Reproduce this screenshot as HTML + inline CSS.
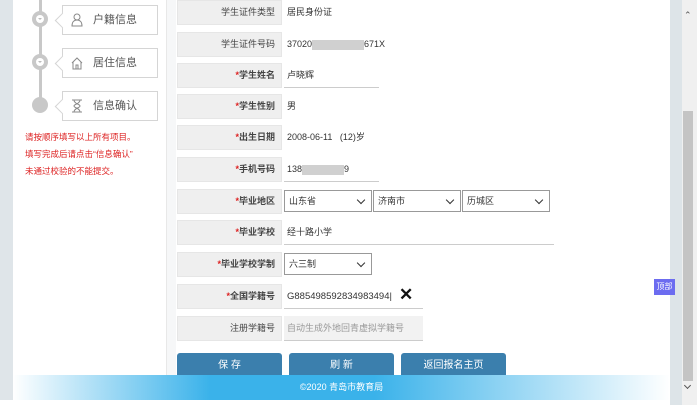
<!DOCTYPE html>
<html><head><meta charset="utf-8"><style>
*{margin:0;padding:0;box-sizing:border-box}
body{width:697px;height:405px;overflow:hidden;background:#fff;font-family:"Liberation Sans","Noto Sans CJK SC",sans-serif;position:relative;font-size:9px;color:#333}
.a{position:absolute}
.lbl{position:absolute;left:177px;width:105px;height:25px;background:#efefef;border:1px solid #e6e6e6;text-align:right;padding-right:6px;line-height:23px;font-size:9px;color:#444}
.lbl.b{font-weight:bold}
.lbl i{color:#d22;font-style:normal}
.val{position:absolute;left:287px;line-height:25px;font-size:9px;color:#333}
.ul{position:absolute;height:1px;background:#ccc}
.sel{position:absolute;height:22px;border:1px solid #999;background:#fff;font-size:9px;line-height:20px;padding-left:4px}
.sel:after{content:"";position:absolute;right:7px;top:6px;width:5px;height:5px;border-right:1.5px solid #333;border-bottom:1.5px solid #333;transform:rotate(45deg)}
.btn{position:absolute;top:353px;width:105px;height:26px;background:#3b7fad;border-radius:3px 3px 0 0;color:#fff;text-align:center;line-height:26px;font-size:10px}
.box{position:absolute;left:62px;width:96px;height:30px;border:1px solid #d5d5d5;background:#fff;font-size:11px;color:#555;line-height:28px;padding-left:30px}
.box:before{content:"";position:absolute;left:-6px;top:9px;width:10px;height:10px;background:#fff;border-left:1px solid #d5d5d5;border-bottom:1px solid #d5d5d5;transform:rotate(45deg)}
.dot{position:absolute;left:32px;width:16px;height:16px;border-radius:50%;background:#c8c8c8}
.dot b{position:absolute;left:4px;top:4px;width:8px;height:8px;border-radius:50%;background:#fff}
.dot b:after{content:"";position:absolute;left:2px;top:3px;border-left:2px solid transparent;border-right:2px solid transparent;border-top:2px solid #bbb}
.red{position:absolute;left:25px;color:#d22;font-size:8.5px}
</style></head><body>
<div class="a" style="left:0;top:0;width:13px;height:400px;background:#dfe5e9"></div>
<div class="a" style="left:166px;top:0;width:1px;height:375px;background:#e8e8e8"></div>
<div class="a" style="left:167px;top:0;width:9px;height:375px;background:#f6f7f8"></div>
<div class="a" style="left:670px;top:0;width:12px;height:405px;background:#dde4e8"></div>
<div class="a" style="left:682px;top:0;width:15px;height:405px;background:#f0f0f0"></div>
<div class="a" style="left:683px;top:111px;width:10px;height:270px;background:#c4c4c4"></div>
<div class="a" style="left:684px;top:10px;font-size:9px;color:#555">&#8963;</div>
<div class="a" style="left:685px;top:383px;width:5px;height:5px;border-right:1.5px solid #555;border-bottom:1.5px solid #555;transform:rotate(45deg)"></div>

<!-- timeline -->
<div class="a" style="left:39px;top:0;width:3px;height:105px;background:#c8c8c8"></div>
<div class="dot" style="top:11px"><b></b></div>
<div class="dot" style="top:54px"><b></b></div>
<div class="dot" style="top:97px"></div>
<div class="box" style="top:5px">户籍信息
<svg class="a" style="left:8px;top:7px" width="12" height="14" viewBox="0 0 12 14" fill="none" stroke="#888" stroke-width="1"><circle cx="6" cy="4" r="3"/><path d="M1 13c0-4 2-6 5-6s5 2 5 6z"/></svg></div>
<div class="box" style="top:48px">居住信息
<svg class="a" style="left:8px;top:7px" width="12" height="14" viewBox="0 0 12 14" fill="none" stroke="#888" stroke-width="1"><path d="M1 7L6 2l5 5M2 6v7h8V6M5 13V9h2v4"/></svg></div>
<div class="box" style="top:91px">信息确认
<svg class="a" style="left:8px;top:7px" width="12" height="14" viewBox="0 0 12 14" fill="none" stroke="#888" stroke-width="1"><path d="M1 1h10M1 13h10M3 1c0 4 6 4 6 6s-6 2-6 6M9 1c0 4-6 4-6 6s6 2 6 6"/></svg></div>
<div class="red" style="top:131px">请按顺序填写以上所有项目。</div>
<div class="red" style="top:148px">填写完成后请点击“信息确认”</div>
<div class="red" style="top:165px">未通过校验的不能提交。</div>

<!-- form -->
<div class="lbl" style="top:0">学生证件类型</div><div class="val" style="top:0">居民身份证</div>
<div class="lbl" style="top:32px">学生证件号码</div><div class="val" style="top:32px">37020<span style="display:inline-block;width:52px;height:10px;background:#d0d0d0;vertical-align:middle"></span>671X</div>
<div class="lbl b" style="top:63px"><i>*</i>学生姓名</div><div class="val" style="top:63px">卢晓辉</div><div class="ul" style="left:284px;top:87px;width:95px"></div>
<div class="lbl b" style="top:94px"><i>*</i>学生性别</div><div class="val" style="top:94px">男</div>
<div class="lbl b" style="top:125px"><i>*</i>出生日期</div><div class="val" style="top:125px">2008-06-11&nbsp;&nbsp;&nbsp;(12)岁</div>
<div class="lbl b" style="top:157px"><i>*</i>手机号码</div><div class="val" style="top:157px">138<span style="display:inline-block;width:42px;height:10px;background:#d0d0d0;vertical-align:middle"></span>9</div><div class="ul" style="left:284px;top:181px;width:95px"></div>
<div class="lbl b" style="top:189px"><i>*</i>毕业地区</div>
<div class="sel" style="left:284px;top:190px;width:88px">山东省</div>
<div class="sel" style="left:373px;top:190px;width:88px">济南市</div>
<div class="sel" style="left:462px;top:190px;width:88px">历城区</div>
<div class="lbl b" style="top:220px"><i>*</i>毕业学校</div><div class="val" style="top:220px">经十路小学</div><div class="ul" style="left:284px;top:244px;width:270px"></div>
<div class="lbl b" style="top:252px"><i>*</i>毕业学校学制</div><div class="sel" style="left:284px;top:253px;width:88px">六三制</div>
<div class="lbl b" style="top:284px"><i>*</i>全国学籍号</div><div class="val" style="top:284px;font-size:9.5px">G885498592834983494|</div><div class="a" style="left:399px;top:285px;font-size:17px;font-weight:bold;color:#111">✕</div><div class="ul" style="left:284px;top:308px;width:139px"></div>
<div class="lbl" style="top:316px">注册学籍号</div><div class="a" style="left:284px;top:316px;width:139px;height:25px;background:#f2f2f2;border-bottom:1px solid #ccc;padding-left:3px;line-height:25px;color:#999">自动生成外地回青虚拟学籍号</div>

<div class="btn" style="left:177px">保 存</div>
<div class="btn" style="left:289px">刷 新</div>
<div class="btn" style="left:401px">返回报名主页</div>

<div class="a" style="left:13px;top:375px;width:657px;height:25px;background:linear-gradient(90deg,#fff 0%,#3ab2ea 30%,#3ab2ea 55%,#fff 100%);color:#fff;text-align:center;line-height:25px;font-size:9px">©2020 青岛市教育局</div>

<div class="a" style="left:654px;top:279px;width:21px;height:16px;background:#6c6cf0;color:#fff;font-size:8px;text-align:center;line-height:16px">顶部</div>
</body></html>
